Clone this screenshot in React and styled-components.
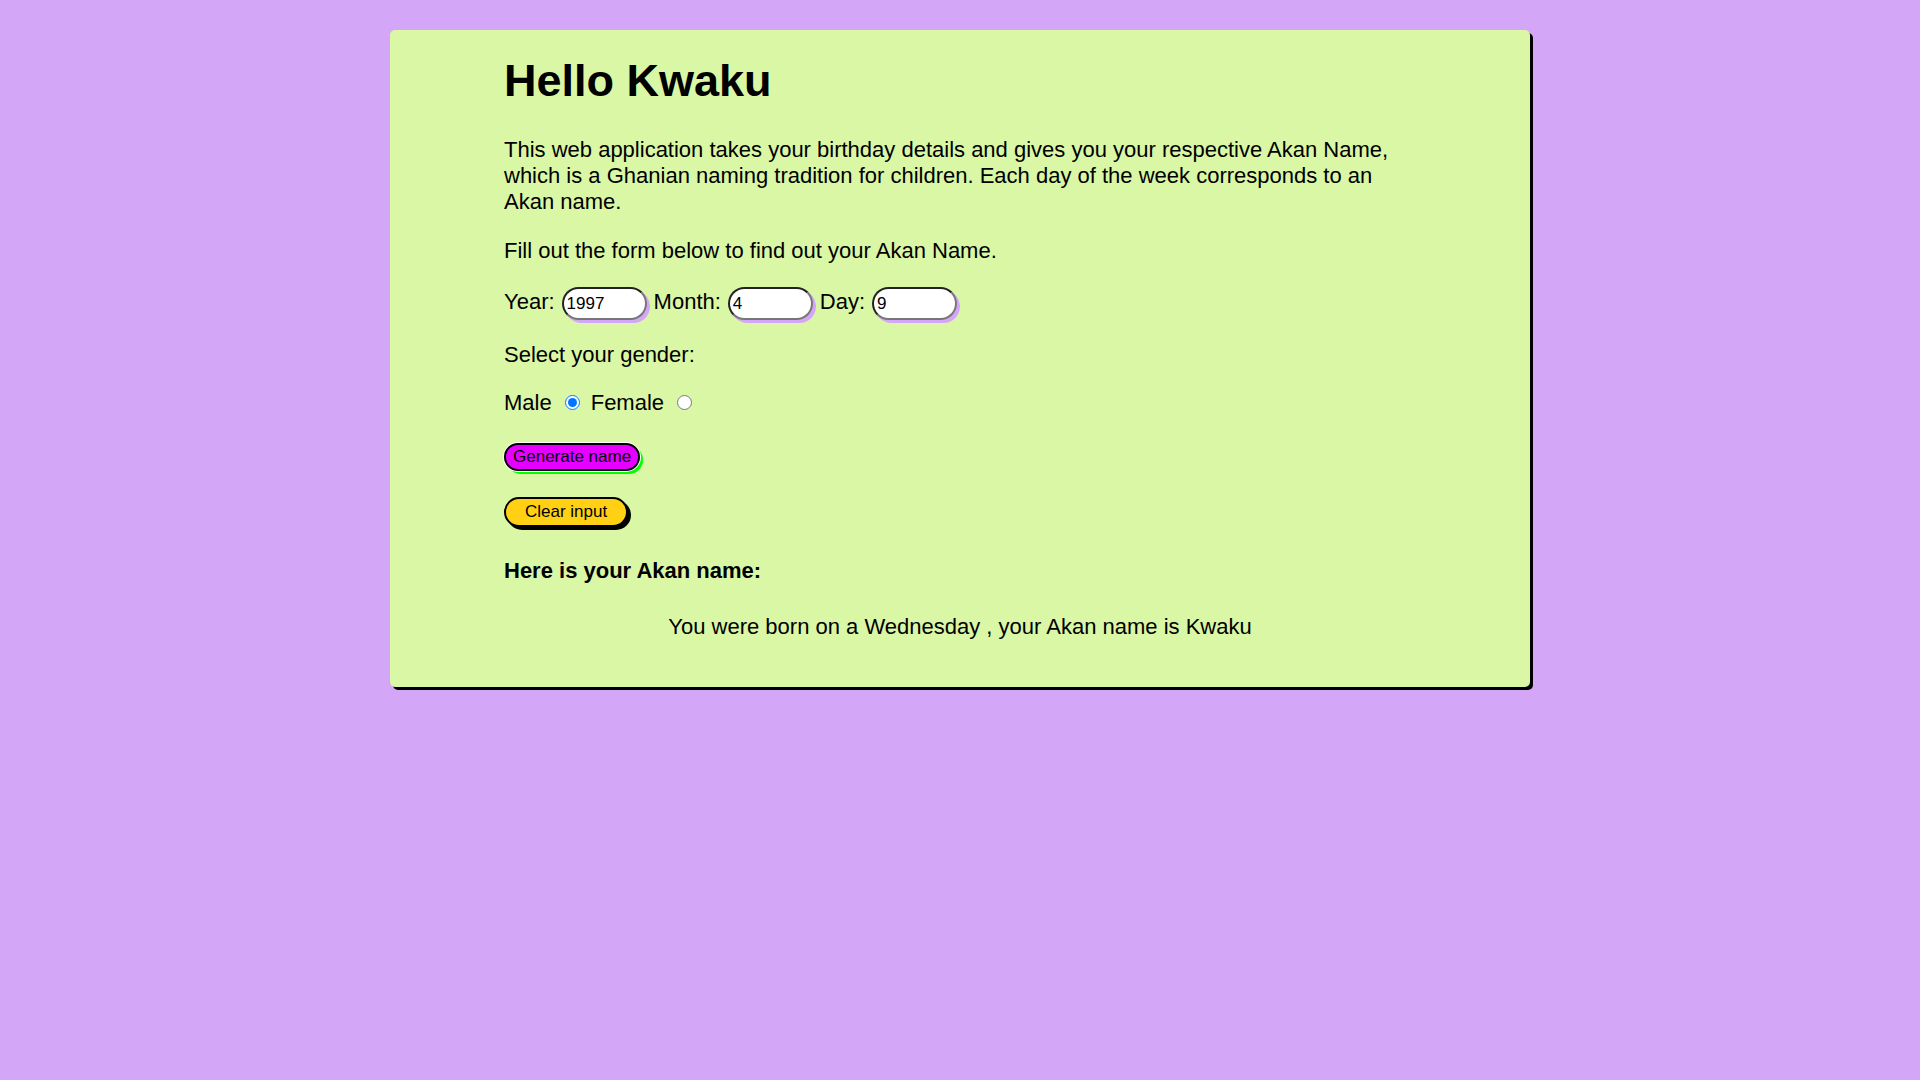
import React, { useState } from "react";
import styled, { createGlobalStyle } from "styled-components";

const GlobalStyle = createGlobalStyle`
  * { box-sizing: border-box; }
  body {
    margin: 0;
    background: #d4a6f7;
    color: #000;
    font-family: "Liberation Sans", Arial, sans-serif;
    font-size: 22px;
    line-height: 26px;
  }
`;

const Card = styled.main`
  width: calc(100% - 60px);
  max-width: 1140px;
  margin: 30px auto;
  padding: 25px 114px 47px;
  border-radius: 5px;
  background: #daf7a6;
  box-shadow: 3px 3px 0 #000;
`;

const Title = styled.h1`
  margin: 0 0 30px;
  font-size: 45px;
  line-height: 52px;
`;

const Text = styled.p`
  margin: 0 0 23px;
`;

const Fields = styled.div`
  display: flex;
  align-items: baseline;
  gap: 7px;
  margin-bottom: 22px;
`;

const NumberInput = styled.input`
  width: 85px;
  height: 33px;
  padding: 1px 3px;
  border: 2px inset #767676;
  border-radius: 20px;
  background: #fff;
  box-shadow: 3px 3px 0 #d4a6f7;
  color: #000;
  font: 17px "Liberation Sans", Arial, sans-serif;
  appearance: textfield;
`;

const Genders = styled.fieldset`
  margin: 0 0 27px;
  padding: 0;
  border: 0;
`;

const Legend = styled.legend`
  padding: 0;
  margin-bottom: 22px;
`;

const Options = styled.div`
  display: flex;
  gap: 11px;
`;

const Option = styled.label`
  display: flex;
  align-items: baseline;
  gap: 13px;
`;

const Radio = styled.input`
  width: 15px;
  height: 15px;
  margin: 0;
`;

const Actions = styled.div`
  display: flex;
  flex-direction: column;
  align-items: flex-start;
  gap: 26px;
  margin-bottom: 31px;
`;

const Button = styled.button`
  padding: ${({ $wide }) => ($wide ? "3px 19px" : "2px 7px")};
  border: 2px solid #000;
  border-radius: 20px;
  background: ${({ $fill }) => $fill};
  box-shadow: ${({ $shadow }) => $shadow};
  color: #000;
  font: 17px/20px "Liberation Sans", Arial, sans-serif;
`;

const ResultTitle = styled.h2`
  margin: 0 0 30px;
  font-size: 22px;
  line-height: 26px;
`;

const Result = styled.p`
  margin: 0;
  text-align: center;
`;

export default function App() {
  const [date, setDate] = useState({ year: "1997", month: "4", day: "9" });
  const change = (e) => setDate({ ...date, [e.target.id]: e.target.value });

  return (
    <>
      <GlobalStyle />
      <Card>
        <Title>Hello Kwaku</Title>
        <Text>
          This web application takes your birthday details and gives you your respective Akan Name,
          which is a Ghanian naming tradition for children. Each day of the week corresponds to an
          Akan name.
        </Text>
        <Text>Fill out the form below to find out your Akan Name.</Text>
        <form onSubmit={(e) => e.preventDefault()}>
          <Fields>
            <label htmlFor="year">Year:</label>
            <NumberInput type="number" id="year" value={date.year} onChange={change} />
            <label htmlFor="month">Month:</label>
            <NumberInput type="number" id="month" value={date.month} onChange={change} />
            <label htmlFor="day">Day:</label>
            <NumberInput type="number" id="day" value={date.day} onChange={change} />
          </Fields>
          <Genders>
            <Legend>Select your gender:</Legend>
            <Options>
              <Option>
                Male
                <Radio type="radio" name="gender" value="male" defaultChecked />
              </Option>
              <Option>
                Female
                <Radio type="radio" name="gender" value="female" />
              </Option>
            </Options>
          </Genders>
          <Actions>
            <Button type="submit" $fill="#e600ff" $shadow="0 0 0 1px #fff, 3px 3px 0 #0f0">
              Generate name
            </Button>
            <Button
              type="button"
              $wide
              $fill="#ffd014"
              $shadow="3px 3px 0 #000"
              onClick={() => setDate({ year: "", month: "", day: "" })}
            >
              Clear input
            </Button>
          </Actions>
        </form>
        <ResultTitle>Here is your Akan name:</ResultTitle>
        <Result>You were born on a Wednesday , your Akan name is Kwaku</Result>
      </Card>
    </>
  );
}
